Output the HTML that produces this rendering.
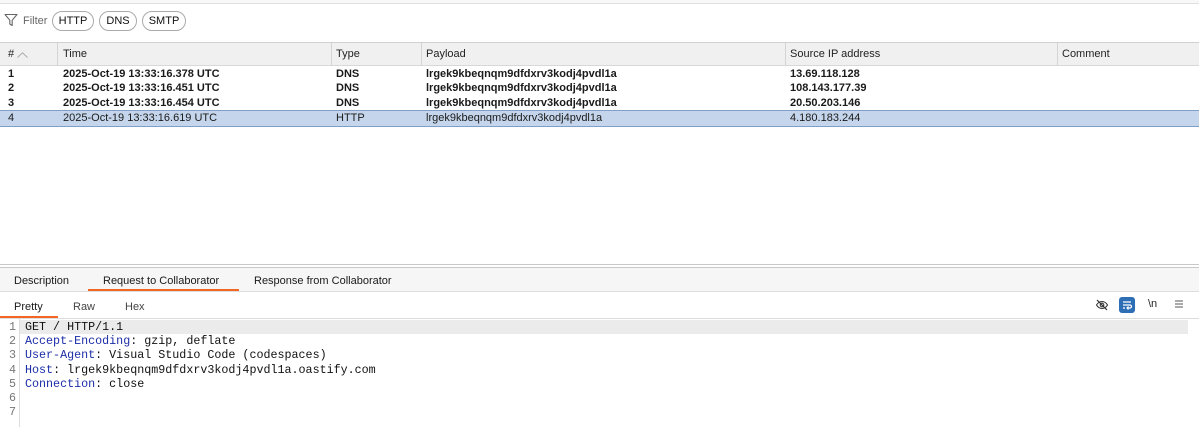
<!DOCTYPE html>
<html><head><meta charset="utf-8"><style>
*{margin:0;padding:0;box-sizing:border-box}
body{width:1199px;height:427px;overflow:hidden;background:#fff;font-family:"Liberation Sans",Arial,sans-serif;font-size:11px;color:#1a1a1a;position:relative}
.abs{position:absolute}
.pill{position:absolute;top:11px;height:20px;border:1px solid #aaa;border-radius:10px;font-size:11px;line-height:18px;padding:0;text-align:center;color:#111;background:#fff}
.hdr{position:absolute;top:42px;left:0;width:1199px;height:24px;background:#f0f0f0;border-top:1px solid #d0d0d0;border-bottom:1px solid #d8d8d8}
.hdr span{position:absolute;top:5px;font-size:11px;color:#222}
.sep{position:absolute;top:0;width:1px;height:23px;background:#d4d4d4}
.row{position:absolute;left:0;width:1199px;height:14px;font-weight:bold;font-size:11px;line-height:14px}
.row span{position:absolute;top:0}
.sel{background:#c5d6ec;font-weight:normal;border-top:1px solid #7f9fc9;border-bottom:1px solid #7f9fc9;height:17px;line-height:15px}
.code{position:absolute;left:25px;font-family:"Liberation Mono",monospace;font-size:11.7px;line-height:14.2px;color:#111;white-space:pre}
.ln{position:absolute;left:0;width:16px;text-align:right;font-family:"Liberation Mono",monospace;font-size:11.7px;line-height:14.2px;color:#777}
.k{color:#1c2ea8}
</style></head><body>
<div class="abs" style="left:0;top:0;width:1199px;height:4px;border-bottom:1px solid #e0e0e0;background:#f8f8f8"></div>
<svg class="abs" style="left:4px;top:13px" width="14" height="14" viewBox="0 0 14 14"><path d="M1 1.5h12L8.2 7.2V12.5L5.8 11V7.2Z" fill="none" stroke="#666" stroke-width="1.1" stroke-linejoin="round"/></svg>
<div class="abs" style="left:23px;top:15px;font-size:11px;color:#666">Filter</div>
<div class="pill" style="left:52px;width:42px">HTTP</div>
<div class="pill" style="left:99px;width:38px">DNS</div>
<div class="pill" style="left:142px;width:44px">SMTP</div>

<div class="hdr">
<span style="left:8px">#</span>
<svg class="abs" style="left:17px;top:9px" width="11" height="6"><path d="M0.5 5.5L5.5 0.8L10.5 5.5" fill="none" stroke="#aaa" stroke-width="1"/></svg>
<div class="sep" style="left:57px"></div><span style="left:63px">Time</span>
<div class="sep" style="left:331px"></div><span style="left:336px">Type</span>
<div class="sep" style="left:421px"></div><span style="left:426px">Payload</span>
<div class="sep" style="left:785px"></div><span style="left:790px">Source IP address</span>
<div class="sep" style="left:1057px"></div><span style="left:1062px">Comment</span>
</div>

<div class="row" style="top:67px"><span style="left:8px">1</span><span style="left:63px">2025-Oct-19 13:33:16.378 UTC</span><span style="left:336px">DNS</span><span style="left:426px">lrgek9kbeqnqm9dfdxrv3kodj4pvdl1a</span><span style="left:790px">13.69.118.128</span></div>
<div class="row" style="top:81px"><span style="left:8px">2</span><span style="left:63px">2025-Oct-19 13:33:16.451 UTC</span><span style="left:336px">DNS</span><span style="left:426px">lrgek9kbeqnqm9dfdxrv3kodj4pvdl1a</span><span style="left:790px">108.143.177.39</span></div>
<div class="row" style="top:96px"><span style="left:8px">3</span><span style="left:63px">2025-Oct-19 13:33:16.454 UTC</span><span style="left:336px">DNS</span><span style="left:426px">lrgek9kbeqnqm9dfdxrv3kodj4pvdl1a</span><span style="left:790px">20.50.203.146</span></div>
<div class="row sel" style="top:110px"><span style="left:8px">4</span><span style="left:63px">2025-Oct-19 13:33:16.619 UTC</span><span style="left:336px">HTTP</span><span style="left:426px">lrgek9kbeqnqm9dfdxrv3kodj4pvdl1a</span><span style="left:790px">4.180.183.244</span></div>

<div class="abs" style="left:0;top:264px;width:1199px;height:1px;background:#c8c8c8"></div>
<div class="abs" style="left:0;top:267px;width:1199px;height:1px;background:#c8c8c8"></div>
<div class="abs" style="left:0;top:268px;width:1199px;height:24px;background:#f6f6f6;border-bottom:1px solid #ddd"></div>
<div class="abs" style="left:14px;top:275px;font-size:11px">Description</div>
<div class="abs" style="left:103px;top:275px;font-size:11px">Request to Collaborator</div>
<div class="abs" style="left:88px;top:289px;width:151px;height:2px;background:#f26722"></div>
<div class="abs" style="left:254px;top:275px;font-size:11px">Response from Collaborator</div>

<div class="abs" style="left:14px;top:301px;font-size:11px">Pretty</div>
<div class="abs" style="left:73px;top:301px;font-size:11px;color:#444">Raw</div>
<div class="abs" style="left:125px;top:301px;font-size:11px;color:#444">Hex</div>
<div class="abs" style="left:0;top:316px;width:58px;height:2px;background:#f26722"></div>
<div class="abs" style="left:0;top:318px;width:1199px;height:1px;background:#ddd"></div>

<svg class="abs" style="left:1095px;top:298px" width="14" height="14" viewBox="0 0 14 14"><path d="M1.5 7C3 4.5 5 3.5 7 3.5S11 4.5 12.5 7C11 9.5 9 10.5 7 10.5S3 9.5 1.5 7Z" fill="none" stroke="#333" stroke-width="1.1"/><circle cx="7" cy="7" r="1.8" fill="none" stroke="#333" stroke-width="1.1"/><path d="M2 2L12 12" stroke="#333" stroke-width="1.2"/></svg>
<div class="abs" style="left:1119px;top:297px;width:16px;height:16px;border-radius:3px;background:#2e6eb5"></div>
<svg class="abs" style="left:1119px;top:297px" width="16" height="16" viewBox="0 0 16 16"><path d="M4 5h8M4 8h7a1.5 1.5 0 0 1 0 3H8M9.5 9.5L8 11l1.5 1.5M4 11h2" fill="none" stroke="#fff" stroke-width="1.2"/></svg>
<div class="abs" style="left:1148px;top:298px;font-size:11px;color:#222">\n</div>
<svg class="abs" style="left:1174px;top:299px" width="10" height="10"><path d="M1 2h8M1 5h8M1 8h8" stroke="#555" stroke-width="1"/></svg>

<div class="abs" style="left:19px;top:319px;width:1px;height:108px;background:#ddd"></div>
<div class="abs" style="left:20px;top:320px;width:1168px;height:14px;background:#ebebeb"></div>
<div class="ln" style="top:320px">1<br>2<br>3<br>4<br>5<br>6<br>7</div>
<div class="code" style="top:320px">GET / HTTP/1.1
<span class="k">Accept-Encoding</span>: gzip, deflate
<span class="k">User-Agent</span>: Visual Studio Code (codespaces)
<span class="k">Host</span>: lrgek9kbeqnqm9dfdxrv3kodj4pvdl1a.oastify.com
<span class="k">Connection</span>: close
</div>
</body></html>
